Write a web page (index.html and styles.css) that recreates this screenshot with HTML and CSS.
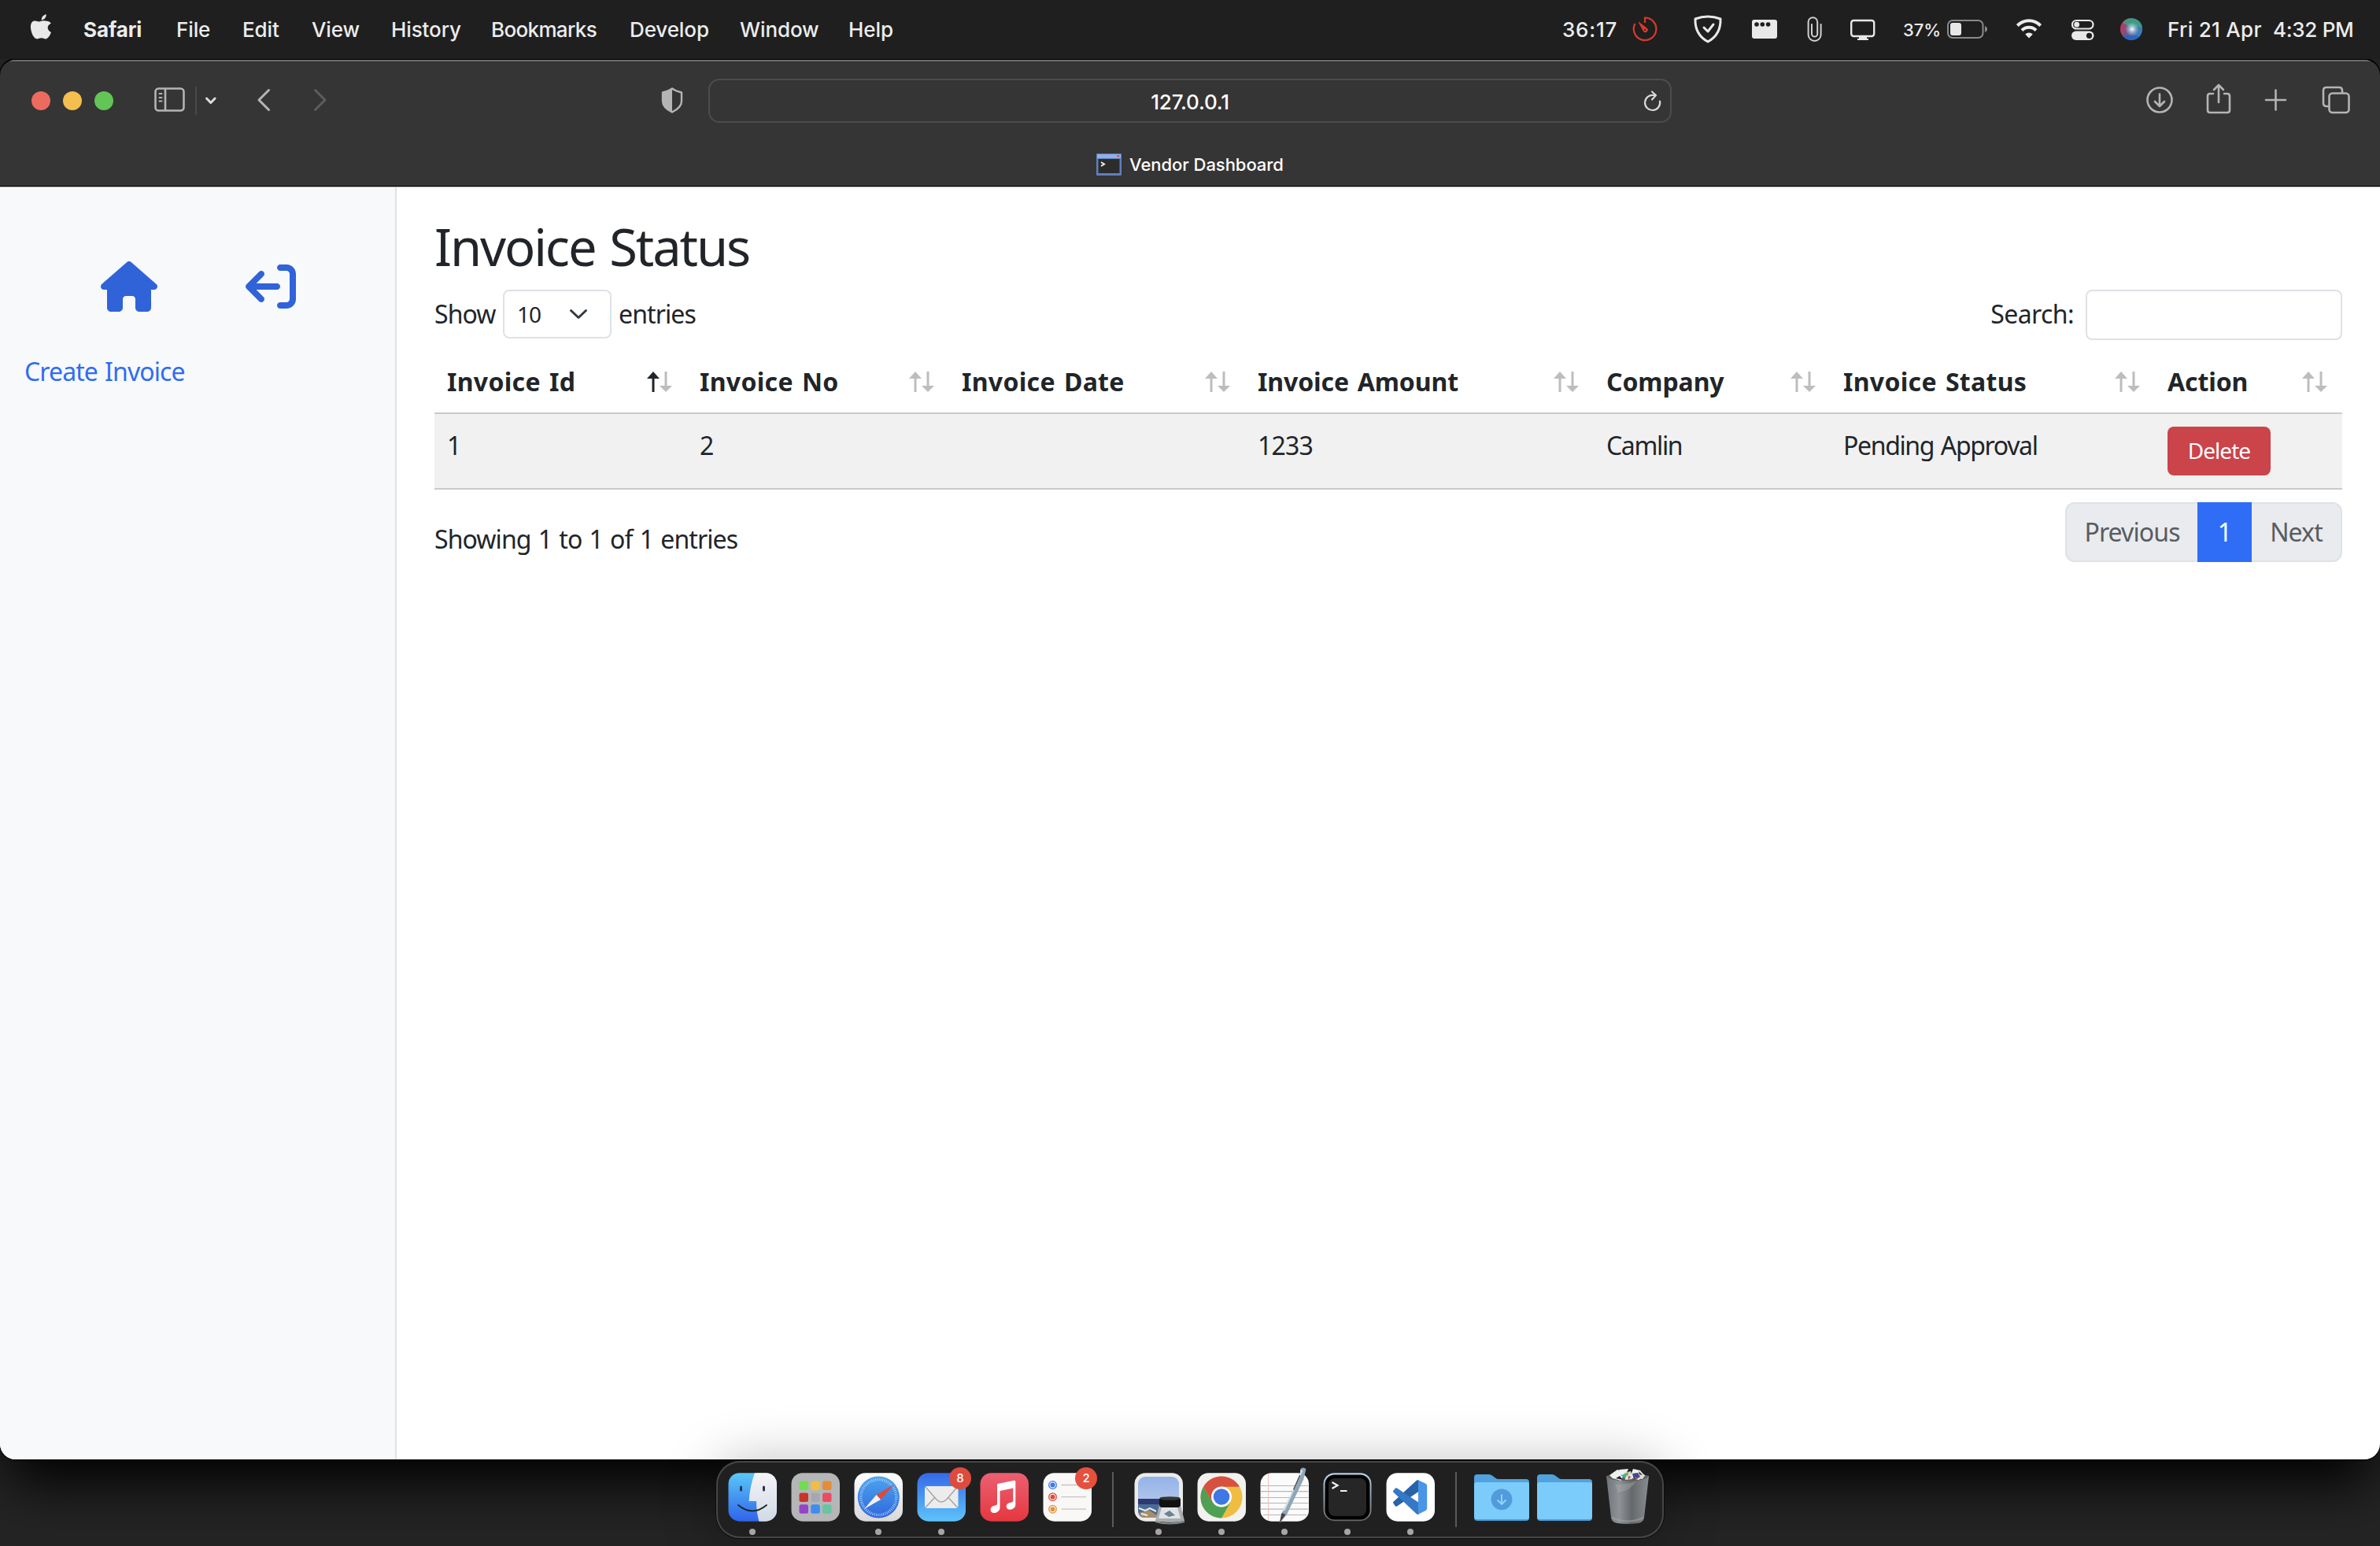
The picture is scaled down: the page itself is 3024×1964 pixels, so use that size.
FILE: index.html
```html
<!DOCTYPE html>
<html lang="en">
<head>
<meta charset="utf-8">
<title>Vendor Dashboard</title>
<link rel="stylesheet" href="styles.css">
</head>
<body>
<nav class="menubar">
  <svg viewBox="0 0 107 75"><path fill="#e8e8e8" d="M58 26.500c-3-1.300-6 .8-8 .8s-4-1.200-6-.8c-4.500.8-5 6-4.500 10 .8 6 4 13 8 13 2 0 3-1.200 5.500-1.200s3.500 1.200 5.500 1.200c3.300 0 6-5.300 7-8.500-5.800-3-5.500-9 0-11.300-1.500-2-4-3.200-7.500-3.200zM53.300 25.300c-.5-3.600 2.600-6.700 6-7.300.4 3.600-2.700 7.200-6 7.300z"/></svg>
  <b>Safari</b><span>File</span><span>Edit</span><span>View</span><span>History</span><span class="bookmarks">Bookmarks</span><span>Develop</span><span>Window</span><span>Help</span>
  <span class="clock">36:17</span>
  <svg viewBox="2070 0 70 75" fill="none" stroke="#d63a2c" stroke-width="2.200"><path d="M2090 29V22.500A14.300 14.300 0 1 1 2077.500 30"/><path fill="#d63a2c" stroke-width="1" d="M2082 28l10.500 8a2.600 2.600 0 1 1-4 4z"/><circle cx="2090" cy="38" r="1" fill="#1f1f1f" stroke="none"/></svg>
  <svg viewBox="2140 0 70 75" fill="none" stroke="#e8e8e8" stroke-width="3" stroke-linecap="round" stroke-linejoin="round"><path d="M2154 24q16-6 32 0c.5 14-5 23-16 29-11-6-16.500-15-16-29z"/><path d="M2165 35l5 5 7-9"/></svg>
  <svg viewBox="2210 0 70 75"><rect x="2226" y="25" width="32" height="24" rx="3" fill="#e8e8e8"/><g fill="#1f1f1f"><circle cx="2232" cy="31" r="2.800"/><circle cx="2239.300" cy="31" r="2.800"/><circle cx="2246.600" cy="31" r="2.800"/></g></svg>
  <svg viewBox="2280 0 50 75" fill="none" stroke="#d0d0d0" stroke-width="2" stroke-linecap="round"><path d="M2302 31v12a3.600 3.600 0 0 0 7.200 0V28a5.800 5.800 0 0 0-11.600 0v16a8 8 0 0 0 16 0V31"/></svg>
  <svg viewBox="2330 0 88 75"><rect x="2352.200" y="26" width="29" height="20" rx="3" fill="none" stroke="#e8e8e8" stroke-width="2.400"/><path fill="#e8e8e8" d="M2362 46h10v3h2v2h-14v-2h2z"/></svg>
  <span class="small">37%</span>
  <svg viewBox="2468 0 76 75"><rect x="2475" y="26" width="44.500" height="22" rx="6" fill="none" stroke="#8a8a8a" stroke-width="2"/><rect x="2478" y="29" width="14" height="16" rx="3" fill="#e8e8e8"/><path fill="#8a8a8a" d="M2522 33c4 1.500 4 6.500 0 8z"/></svg>
  <svg viewBox="2544 0 70 75" fill="none" stroke="#ececec" stroke-width="4"><path d="M2563.300 32.500a20.500 20.500 0 0 1 29.400 0M2569 38.500a12.800 12.800 0 0 1 18 0"/><path fill="#ececec" stroke="none" d="M2578 48.500l-4.800-5a7 7 0 0 1 9.600 0z"/></svg>
  <svg viewBox="2614 0 60 75"><rect x="2633" y="26" width="26.500" height="10.500" rx="5.200" fill="none" stroke="#e8e8e8" stroke-width="2.200"/><circle cx="2638.700" cy="31.200" r="3.400" fill="#e8e8e8"/><rect x="2632" y="39.500" width="28.500" height="11.500" rx="5.700" fill="#e8e8e8"/><circle cx="2654.500" cy="45.300" r="3.600" fill="#1f1f1f"/></svg>
  <svg viewBox="2674 0 80 75"><defs><linearGradient id="siri" x1="0" y1=".3" x2="1" y2=".7"><stop offset="0" stop-color="#d32f5e"/><stop offset=".4" stop-color="#6b5a85"/><stop offset="1" stop-color="#2e86c8"/></linearGradient><radialGradient id="glow"><stop offset="0" stop-color="#fff"/><stop offset="1" stop-color="#8fd3f0" stop-opacity="0"/></radialGradient></defs><circle cx="2708" cy="37" r="14" fill="url(#siri)"/><path d="M2697 29a14 14 0 0 1 25 6q-10-3-14 0z" fill="#35a880" opacity=".8"/><path d="M2697 45q10-1 22 1a14 14 0 0 1-22-1z" fill="#2264c8" opacity=".8"/><circle cx="2709" cy="37" r="9" fill="url(#glow)"/></svg>
  <span class="date">Fri 21 Apr</span><span class="time">4:32 PM</span>
</nav>

<div class="window">
  <div class="toolbar">
    <svg viewBox="0 78 900 100" fill="none" stroke-linecap="round" stroke-linejoin="round">
      <circle cx="52" cy="128" r="12" fill="#ed6a5f"/><circle cx="92" cy="128" r="12" fill="#f5bf4f"/><circle cx="132" cy="128" r="12" fill="#62c555"/>
      <g stroke="#b4b4b4" stroke-width="2.600"><rect x="197.500" y="112.500" width="36" height="28" rx="4"/><path d="M210 113v27"/><path stroke-width="2" d="M202.500 119h3M202.500 124h3M202.500 128.500h3"/></g>
      <path d="M249 111v34" stroke="#4a4a4a" stroke-width="2"/>
      <path d="M262.500 125l5.300 5.500 5.300-5.500" stroke="#dcdcdc" stroke-width="3"/>
      <path d="M341.500 114.500L329 127l12.500 12.500" stroke="#b4b4b4" stroke-width="3"/>
      <path d="M400.500 114.500L413 127l-12.500 12.500" stroke="#5c5c5c" stroke-width="3"/>
      <path d="M854 112.500c4 3 8 4 12 5v11c0 7-6 11-12 14-6-3-12-7-12-14v-11c4-1 8-2 12-5z" stroke="#b4b4b4" stroke-width="2.400"/><path d="M854 112.500c-4 3-8 4-12 5v11c0 7 6 11 12 14z" fill="#b4b4b4"/>
    </svg>
    <div class="address"><span>127.0.0.1</span>
      <svg viewBox="2084 104 32 48" fill="none" stroke="#d8d8d8" stroke-width="2.200" stroke-linecap="round" stroke-linejoin="round"><path d="M2109 127.500a9.600 9.600 0 1 1-7.500-7.500h2M2099 115.500l5 4.500-5 5.500"/></svg>
    </div>
    <svg viewBox="2124 78 900 100" fill="none" stroke="#b4b4b4" stroke-width="2.600" stroke-linecap="round" stroke-linejoin="round">
      <circle cx="2744" cy="127" r="15.500"/><path d="M2744 119.500v15M2738 129l6 6 6-6"/>
      <path d="M2812 119h-4q-3 0-3 3v18q0 3 3 3h22q3 0 3-3v-18q0-3-3-3h-4M2819 130v-21M2813 114l6-6 6 6"/>
      <path d="M2891.500 114.500v25M2879 127h25"/>
      <path d="M2958 135h-2q-4 0-4-4v-16q0-4 4-4h16q4 0 4 4v2"/><rect x="2959.500" y="118.500" width="25" height="24.500" rx="4"/>
    </svg>
  </div>
  <div class="tab">
    <svg viewBox="0 0 32 28"><rect width="32" height="28" rx="1" fill="#5f7fbc"/><rect x="1" y="1" width="30" height="5" fill="#8fb0e8"/><rect x="26" y="2" width="3.500" height="2.500" fill="#e06048"/><rect x="2.500" y="7" width="27" height="18" fill="#2c2c2c"/><path d="M6 11l4 2.500L6 16" stroke="#eee" stroke-width="2" fill="none"/></svg>
    <span>Vendor Dashboard</span>
  </div>
  <div class="page">
    <aside class="sidebar">
      <div class="links">
        <svg class="house" viewBox="0 0 576 512"><path fill="#3063d8" d="M575.800 255.500c0 18-15 32.100-32 32.100h-32l.7 160.200c0 2.700-.2 5.400-.5 8.100V472c0 22.100-17.900 40-40 40H392c-22.100 0-40-17.900-40-40v-88c0-17.700-14.300-32-32-32h-64c-17.700 0-32 14.300-32 32v88c0 22.100-17.900 40-40 40h-80c-22.100 0-40-17.900-40-40V287.600H32c-18 0-32-14-32-32.100 0-9 3-17 10-24L266.400 8c7-7 15-8 22-8s15 2 21 7l255.400 224.500c8 7 12 15 11 24z"/></svg>
        <svg class="leave" viewBox="0 0 512 512"><path fill="#3063d8" transform="matrix(-1 0 0 1 512 0)" d="M502.600 278.600c12.500-12.500 12.500-32.800 0-45.300l-128-128c-12.500-12.500-32.800-12.500-45.300 0s-12.500 32.800 0 45.300L402.700 224H192c-17.700 0-32 14.300-32 32s14.300 32 32 32h210.700l-73.400 73.400c-12.500 12.500-12.500 32.800 0 45.300s32.800 12.500 45.300 0zM160 96c17.700 0 32-14.300 32-32s-14.300-32-32-32H96C43 32 0 75 0 128v256c0 53 43 96 96 96h64c17.700 0 32-14.300 32-32s-14.300-32-32-32H96c-17.700 0-32-14.300-32-32V128c0-17.700 14.300-32 32-32z"/></svg>
      </div>
      <a class="create">Create Invoice</a>
    </aside>
    <main>
      <h2>Invoice Status</h2>
      <div class="controls">
        <span class="show">Show</span>
        <div class="select"><span>10</span><svg viewBox="0 0 24 14" fill="none" stroke="#343a40" stroke-width="3" stroke-linecap="round" stroke-linejoin="round"><path d="M2.500 2.500l9.500 9 9.500-9"/></svg></div>
        <span class="entries">entries</span>
        <span class="search-label">Search:</span><div class="search"></div>
      </div>
      <table>
        <colgroup><col class="c1"><col class="c2"><col class="c3"><col class="c4"><col class="c5"><col class="c6"><col class="c7"></colgroup>
        <thead><tr>
          <th><div><span>Invoice Id</span><svg class="sort asc" viewBox="0 0 32 26"><use href="#up"/><use href="#down"/></svg></div></th>
          <th><div><span>Invoice No</span><svg class="sort" viewBox="0 0 32 26"><use href="#up"/><use href="#down"/></svg></div></th>
          <th><div><span>Invoice Date</span><svg class="sort" viewBox="0 0 32 26"><use href="#up"/><use href="#down"/></svg></div></th>
          <th><div><span class="tight">Invoice Amount</span><svg class="sort" viewBox="0 0 32 26"><use href="#up"/><use href="#down"/></svg></div></th>
          <th><div><span class="tight">Company</span><svg class="sort" viewBox="0 0 32 26"><use href="#up"/><use href="#down"/></svg></div></th>
          <th><div><span>Invoice Status</span><svg class="sort" viewBox="0 0 32 26"><use href="#up"/><use href="#down"/></svg></div></th>
          <th><div><span class="tight">Action</span><svg class="sort" viewBox="0 0 32 26"><use href="#up"/><use href="#down"/></svg></div></th>
        </tr></thead>
        <tbody><tr><td>1</td><td>2</td><td></td><td class="amount">1233</td><td>Camlin</td><td>Pending Approval</td><td class="act"><div class="delete">Delete</div></td></tr></tbody>
      </table>
      <div class="footer">
        <span class="info">Showing 1 to 1 of 1 entries</span>
        <div class="pages"><span class="prev">Previous</span><span class="current">1</span><span class="next">Next</span></div>
      </div>
    </main>
  </div>
</div>

<div class="dock">
  <svg viewBox="0 0 80 98">
    <defs>
      <path id="up" d="M8 0l8 9h-6.500v17h-3V9H0z"/>
      <path id="down" fill="#bcbdbe" d="M24 26l8-8h-6.500V0h-3v18H16z"/>
      <linearGradient id="face" x2="0" y2="1"><stop stop-color="#5ac8f8"/><stop offset="1" stop-color="#2f63ea"/></linearGradient>
      <linearGradient id="pale" x2="0" y2="1"><stop stop-color="#f4f4f6"/><stop offset="1" stop-color="#d2d9e6"/></linearGradient>
      <linearGradient id="white" x2="0" y2="1"><stop stop-color="#fff"/><stop offset="1" stop-color="#d8d8d8"/></linearGradient>
      <linearGradient id="blue" x2="0" y2="1"><stop stop-color="#4ba4ee"/><stop offset="1" stop-color="#3168dd"/></linearGradient>
      <linearGradient id="mail" x2="0" y2="1"><stop stop-color="#3569e8"/><stop offset="1" stop-color="#5ec4fa"/></linearGradient>
      <linearGradient id="music" x2="0" y2="1"><stop stop-color="#ec6072"/><stop offset="1" stop-color="#e5373f"/></linearGradient>
      <linearGradient id="sky" x2="0" y2="1"><stop stop-color="#93b3e8"/><stop offset="1" stop-color="#c3d0ec"/></linearGradient>
      <linearGradient id="bin"><stop stop-color="#70757a"/><stop offset=".3" stop-color="#8f9397"/><stop offset=".6" stop-color="#66696c"/><stop offset="1" stop-color="#8a8d90"/></linearGradient>
      <linearGradient id="metal" x2="0" y2="1"><stop stop-color="#b5d3ea"/><stop offset="1" stop-color="#666"/></linearGradient>
      <clipPath id="tile"><rect x="9.500" y="15.200" width="61.500" height="61.500" rx="14"/></clipPath>
    </defs>
    <g clip-path="url(#tile)"><rect x="9" y="15" width="62" height="62" fill="url(#face)"/><path fill="url(#pale)" d="M43 15q-6 16-7.500 36H45q0 14 3.500 26H72V15z"/></g>
    <path d="M25.500 33v4M54.500 33v4" stroke="#26384a" stroke-width="3" stroke-linecap="round"/><path d="M22 56q18 15 36 0" fill="none" stroke="#1c2530" stroke-width="1.800" stroke-linecap="round"/>
    <circle cx="40" cy="90" r="4" fill="#a5a5a5"/>
  </svg>
  <svg viewBox="0 0 80 98"><rect x="9.500" y="15.200" width="61.500" height="61.500" rx="14" fill="#b5b6b7"/>
    <rect x="19.500" y="25.500" width="11.500" height="11.500" rx="2.500" fill="#72dc50"/><rect x="34.300" y="25.500" width="11.500" height="11.500" rx="2.500" fill="#f2bd42"/><rect x="49" y="25.500" width="11.500" height="11.500" rx="2.500" fill="#e58c38"/>
    <rect x="19.500" y="40.500" width="11.500" height="11.500" rx="2.500" fill="#c93429"/><rect x="34.300" y="40.500" width="11.500" height="11.500" rx="2.500" fill="#a3a9ae"/><rect x="49" y="40.500" width="11.500" height="11.500" rx="2.500" fill="#ea4c62"/>
    <rect x="19.500" y="55.300" width="11.500" height="11.500" rx="2.500" fill="#9344c8"/><rect x="34.300" y="55.300" width="11.500" height="11.500" rx="2.500" fill="#3d8df2"/><rect x="49" y="55.300" width="11.500" height="11.500" rx="2.500" fill="#67c5a0"/></svg>
  <svg viewBox="0 0 80 98"><rect x="9.500" y="15.200" width="61.500" height="61.500" rx="14" fill="url(#white)"/><circle cx="40.300" cy="46" r="26.500" fill="url(#blue)"/><circle cx="40.300" cy="46" r="22.500" fill="none" stroke="#b9d8f8" stroke-width="3.500" stroke-dasharray=".8 1.550"/><path fill="#dd4a3c" d="M60 30L37.500 43l5.500 6z"/><path fill="#f1f1f1" d="M22 61l15.500-18 5.500 6z"/><circle cx="40" cy="90" r="4" fill="#a5a5a5"/></svg>
  <svg viewBox="0 0 80 98"><rect x="9.500" y="15.200" width="61.500" height="61.500" rx="14" fill="url(#mail)"/><rect x="19" y="32" width="42.500" height="28" rx="3" fill="#ececec"/><path d="M20 59l12-13M60.500 59l-12-13M20 33l14 16q6 6 12.500 0l14-16" fill="none" stroke="#a3a3a3" stroke-width="1.400"/><circle cx="64" cy="22" r="14" fill="#dd4b3e"/><text x="64" y="27.200" class="badge">8</text><circle cx="40" cy="90" r="4" fill="#a5a5a5"/></svg>
  <svg viewBox="0 0 80 98"><rect x="9.500" y="15.200" width="61.500" height="61.500" rx="14" fill="url(#music)"/><path fill="#fff" d="M31 30.500q0-1.500 1.500-1.800l20-4q1.800-.3 1.800 1.500v29c0 4-3 6-6.500 6.500-6 .8-7-7-1.500-8.500 3-.8 5-.8 5-3V34.500L34.500 38v21c0 4-3 6.500-6.500 7-7 .8-7-7.500-1.500-9 3-.8 4.500-.8 4.500-3z"/></svg>
  <svg viewBox="0 0 80 98"><rect x="9.500" y="15.200" width="61.500" height="61.500" rx="14" fill="#f9f8f7"/><path d="M32.500 30.500H64M32.500 45.700H64M32.500 61.200H64" stroke="#c4c4c4" stroke-width="1.300"/><g stroke-width="1.300" fill="none"><circle cx="21.500" cy="30.500" r="4.800" stroke="#3478f6"/><circle cx="21.500" cy="45.700" r="4.800" stroke="#d94c3e"/><circle cx="21.500" cy="61.200" r="4.800" stroke="#e2943c"/></g><circle cx="21.500" cy="30.500" r="3" fill="#3478f6"/><circle cx="21.500" cy="45.700" r="3" fill="#e04a3c"/><circle cx="21.500" cy="61.200" r="3" fill="#e2943c"/><circle cx="64" cy="22" r="14" fill="#e5503f"/><text x="64" y="27.200" class="badge">2</text></svg>
  <i class="divider"></i>
  <svg viewBox="0 0 80 98"><rect x="9.500" y="15.200" width="61.500" height="61.500" rx="14" fill="#ecebea"/><rect x="14" y="20" width="52" height="52" rx="9" fill="url(#sky)"/><path fill="#2c3a72" d="M14 48h52v8H14z"/><path fill="#4a6b94" d="M14 55h52v8q0 9-9 9H23q-9 0-9-9z"/><path fill="#a88d6a" d="M15 66l12-4 16 10H23q-6 0-8-6z"/><path d="M15 60l8 3 6-3 8 4M18 67l8 2" stroke="#e9eef2" stroke-width="2" fill="none"/><path fill="#a9adb0" d="M41 56h27l5 20q-16 4-37 0z"/><path fill="#dfe3e6" d="M44 59h20l4 14H40z"/><path d="M47 67l7-4 7 6-8 2z" fill="#6b828f"/><path d="M36 77q18 5 37 0" stroke="#85888a" stroke-width="2" fill="none"/><rect x="41" y="46" width="27" height="13" rx="4" fill="#111"/><ellipse cx="54.500" cy="47.500" rx="13" ry="2.300" fill="#363636"/><circle cx="40" cy="90" r="4" fill="#a5a5a5"/></svg>
  <svg viewBox="0 0 80 98"><rect x="9.500" y="15.200" width="61.500" height="61.500" rx="14" fill="#f1f1f0"/><circle cx="40" cy="46" r="26.500" fill="#eebd42"/><path fill="#4f9f55" d="M17 32.800A26.500 26.500 0 0 0 40 72.500L51.300 52.500 28.700 52.500z"/><path fill="#d8503f" d="M17 32.800a26.500 26.500 0 0 1 46 0H40L28.700 52.500z"/><circle cx="40" cy="45.500" r="13" fill="#fff"/><circle cx="40" cy="45.500" r="10.300" fill="#3f78e4"/><circle cx="40" cy="90" r="4" fill="#a5a5a5"/></svg>
  <svg viewBox="0 0 80 98"><rect x="9.500" y="15.200" width="61.500" height="61.500" rx="14" fill="#fbfbfb"/><path d="M10 31.500h60.500M10 38.700h60.500M10 46.500h60.500M10 53.500h60.500M10 61.200h60.500M13 68.500h55" stroke="#b5b5b5" stroke-width="1.200"/><path d="M19.500 16v60" stroke="#f0c0bb"/><path fill="#8fa6b8" d="M60.500 10q4-3 7 .5L64 24 43 68l-9 11 3-14 22-44z"/><path fill="#d5e2ea" d="M60.500 11l3 1L41 62l-4 3 22-44z"/><path fill="#444" d="M36.500 66l5 2-8 11zM51 36l8-18 1.300.5L52 37z"/><circle cx="40" cy="90" r="4" fill="#a5a5a5"/></svg>
  <svg viewBox="0 0 80 98"><rect x="9.500" y="15.200" width="61" height="61" rx="14" fill="url(#metal)"/><rect x="11.500" y="17.500" width="57" height="57" rx="12" fill="#000"/><rect x="16" y="22" width="48" height="48" rx="8" fill="#262626"/><path d="M20.500 27l7 4-7 4M31 38h8.500" stroke="#f2f2f2" stroke-width="2.200" fill="none"/><circle cx="40" cy="90" r="4" fill="#a5a5a5"/></svg>
  <svg viewBox="0 0 80 98"><rect x="9.500" y="15.200" width="61.500" height="61.500" rx="14" fill="#fff"/><path fill="#2862a8" d="M18.500 54q-1-1.200 0-2.300L47.500 25q1.500-1.400 3.500-.5v14L23 57.500q-1 .7-2 0z"/><path fill="#3578c6" d="M18.500 37.500q-1 1.200 0 2.300L47.500 67q1.500 1.400 3.500.5V53L23 34.500q-1-.7-2 0z"/><path fill="#4a96e6" d="M50 24.300l9.500 4.500q1.700 1 1.700 3V60q0 2-1.700 3L50 67.800z"/><circle cx="40" cy="90" r="4" fill="#a5a5a5"/></svg>
  <i class="divider"></i>
  <svg viewBox="0 0 80 98"><path fill="#50a2dc" d="M5 21q0-4 4-4h15q2 0 4 1.500l4 3q2 1.500 4 1.500h35q4 0 4 4v10H5z"/><rect x="5" y="27" width="70" height="49" rx="4" fill="#4b9fd8"/><rect x="5" y="27" width="70" height="47" rx="3" fill="#7bcbfb"/><circle cx="40" cy="48.800" r="13.400" fill="#529bdb"/><path d="M40 42.500v12M34.500 49.500l5.500 5.300 5.500-5.300" fill="none" stroke="#8fd2fb" stroke-width="2"/></svg>
  <svg viewBox="0 0 80 98"><path fill="#50a2dc" d="M5 21q0-4 4-4h15q2 0 4 1.500l4 3q2 1.500 4 1.500h35q4 0 4 4v10H5z"/><rect x="5" y="27" width="70" height="49" rx="4" fill="#4b9fd8"/><rect x="5" y="27" width="70" height="47" rx="3" fill="#7bcbfb"/></svg>
  <svg viewBox="0 0 80 98"><path fill="url(#bin)" d="M13 19q27-6 54 0l-6 53q-1 6-8 7-13 2-26 0-7-1-8-7z"/><path fill="#5d6062" d="M14 19q26-8 52 0-1 6-26 6.500Q15 25 14 19z"/><path fill="#eee" d="M17 18l10-7 9 3-4 11-11-3zM43 21l4-11 9 2 6 7-8 5zM29 11l12-1-4 9z"/><path fill="#ddd" d="M36 15l8-2 2 10-9 1zM56 14l6 4-3 5-5-1z"/><path fill="#37b49c" d="M31 18l9-2-3 6z"/><path fill="#7db24a" d="M35 16l7-2-2 5z"/><path fill="#3b4b8d" d="M46 16l7-1 3 5-8 4z"/><path fill="#b0502f" d="M49 20l6 1-5 3zM41 19l3 1-3 4z"/><path fill="#222" d="M25 22l5-3 4 5zM54 13l5 5-4-1z"/><path fill="#aaaeb0" opacity=".4" d="M24 30q14 0 26-4-6 12-22 14z"/><path d="M20 72q20 9 40 0" stroke="#a2a5a7" stroke-width="2" fill="none" opacity=".6"/></svg>
</div>
</body>
</html>
```

FILE: styles.css
```css
* { box-sizing: border-box; }
body {
  margin: 0;
  width: 3024px;
  height: 1964px;
  overflow: hidden;
  display: flex;
  flex-direction: column;
  background: #242424;
  font-family: Inter, "Liberation Sans", sans-serif;
  font-size: 26px;
  color: #ececec;
}
svg { display: block; }

.menubar {
  position: relative;
  z-index: 2;
  flex: none;
  height: 75px;
  display: grid;
  grid-template-columns: 106px 118px 84px 88px 101px 127px 176px 140px 138px 1fr 85px 70px 70px 70px 50px 88px 50px 76px 70px 60px 80px 134px 136px;
  align-items: center;
  background: #1f1f1f;
  line-height: 72px;
  white-space: nowrap;
  font-weight: 500;
  letter-spacing: -.1px;
}
.menubar svg { width: 100%; height: 75px; }
.menubar .small { font-size: 22px; }
.menubar .bookmarks { letter-spacing: -.65px; }
.menubar .clock { letter-spacing: .8px; }
.menubar .date { letter-spacing: .3px; }
.menubar .time { letter-spacing: -.3px; }

.window {
  flex: none;
  height: 1779px;
  border-radius: 20px;
  box-shadow: 0 40px 70px -12px #000, 0 0 0 1px #000;
  display: flex;
  flex-direction: column;
  overflow: hidden;
  background: #353535;
  border-top: 1px solid #000;
}
.toolbar {
  flex: none;
  height: 102px;
  border-top: 2px solid #6c6c6c;
  display: grid;
  grid-template-columns: 900px 1224px 900px;
  align-items: center;
}
.toolbar > svg { width: 900px; height: 100px; }
.address {
  height: 56px;
  border: 2px solid #4c4c4c;
  border-radius: 14px;
  display: grid;
  grid-template-columns: 32px 1fr 32px;
  align-items: center;
  padding: 0 6px;
  color: #fff;
  line-height: 52px;
  text-align: center;
  font-weight: 500;
  letter-spacing: -.2px;
}
.address span { grid-column: 2; padding-top: 2px; }
.address svg { width: 32px; height: 48px; }
.tab {
  flex: none;
  height: 59px;
  border-bottom: 1px solid #000;
  display: flex;
  justify-content: center;
  align-items: center;
  gap: 10px;
  padding-top: 3px;
  font-size: 22px;
  font-weight: 500;
  letter-spacing: -.05px;
  color: #fff;
}
.tab svg { width: 32px; height: 28px; }

.page {
  flex: 1;
  display: flex;
  border-top: 1px solid #b5b5b5;
  background: #fff;
  font-family: "Noto Sans", "DejaVu Sans Condensed", sans-serif;
  font-size: 32px;
  line-height: 45px;
  letter-spacing: -.9px;
  word-spacing: 1.7px;
  color: #212529;
  white-space: nowrap;
}
.sidebar {
  flex: none;
  width: 504px;
  border-right: 2px solid #dee2e6;
  background: #f8f9fb;
  padding: 94px 0 0 32px;
}
.links { display: flex; padding-left: 96px; gap: 112px; }
.house { width: 72px; height: 64px; }
.leave { width: 64px; height: 64px; }
.create { display: block; margin-top: 53px; margin-left: -1px; color: #2f6df2; }

main { flex: 1; padding: 39px 48px 0; }
h2 { margin: 0 0 19px; font-size: 65px; line-height: 72px; font-weight: 400; letter-spacing: -2.1px; word-spacing: 3px; }
.controls { display: flex; height: 64px; padding-bottom: 2px; align-items: center; }
.controls > span { padding-bottom: 2px; }
.show { width: 87px; }
.select {
  width: 138px;
  height: 62px;
  border: 2px solid #dee2e6;
  border-radius: 8px;
  display: flex;
  align-items: center;
  justify-content: space-between;
  padding: 0 28px 0 16px;
  font-size: 28px;
}
.select svg { width: 24px; height: 14px; }
.entries { margin-left: 9px; }
.search-label { margin-left: auto; margin-right: 15px; letter-spacing: -.6px; }
.search { width: 326px; height: 64px; border: 2px solid #dee2e6; border-radius: 8px; align-self: flex-start; flex: none; }

table { width: 2424px; table-layout: fixed; border-collapse: separate; border-spacing: 0; margin-top: 12px; }
.c1 { width: 321px; } .c2 { width: 333px; } .c3 { width: 376px; } .c4 { width: 443px; }
.c5 { width: 301px; } .c6 { width: 412px; } .c7 { width: 238px; }
th { height: 82px; padding: 1px 19px 0 16px; border-bottom: 2px solid #c9cacb; text-align: left; font-weight: 700; letter-spacing: .3px; word-spacing: 2.5px; }
th div { display: flex; align-items: center; justify-content: space-between; }
th .tight { letter-spacing: -.1px; }
.sort { width: 32px; height: 26px; fill: #bcbdbe; }
.sort.asc { fill: #212529; }
td { height: 96px; padding: 17px 16px 0; vertical-align: top; background: #f1f1f1; border-bottom: 2px solid #c9cacb; letter-spacing: -1.35px; }
td.amount { letter-spacing: -.8px; }
td.act { padding-top: 16px; }
.delete { width: 131px; height: 62px; border-radius: 8px; background: #cb444a; color: #fff; font-size: 28px; line-height: 61px; letter-spacing: -.95px; text-align: center; }
.footer { display: flex; justify-content: space-between; padding-top: 16px; }
.info { padding-top: 24px; }
.pages { display: flex; height: 76px; line-height: 72px; text-align: center; color: #595c5f; }
.pages span { border: 2px solid #dee2e6; background: #e9ebef; }
.pages .prev { width: 168px; border-right: 0; border-radius: 12px 0 0 12px; }
.pages .current { width: 69px; background: #2f6df6; border-color: #2f6df6; color: #fff; }
.pages .next { width: 115px; border-left: 0; border-radius: 0 12px 12px 0; }

.dock {
  position: relative;
  flex: none;
  width: 1204px;
  height: 98px;
  margin: 2px 0 0 910px;
  border-radius: 30px;
  background: #202020;
  box-shadow: inset 0 0 0 2px #464646, 0 0 0 1px #0c0c0c, 0 4px 70px rgba(0, 0, 0, .28);
  display: flex;
  padding-left: 6px;
}
.dock svg { flex: none; width: 80px; height: 98px; }
.divider { flex: none; width: 2px; height: 70px; margin: 14px 17px 0; background: #5a5a5a; }
.badge { font: 500 15px Inter, sans-serif; letter-spacing: 0; fill: #fff; text-anchor: middle; }
```
